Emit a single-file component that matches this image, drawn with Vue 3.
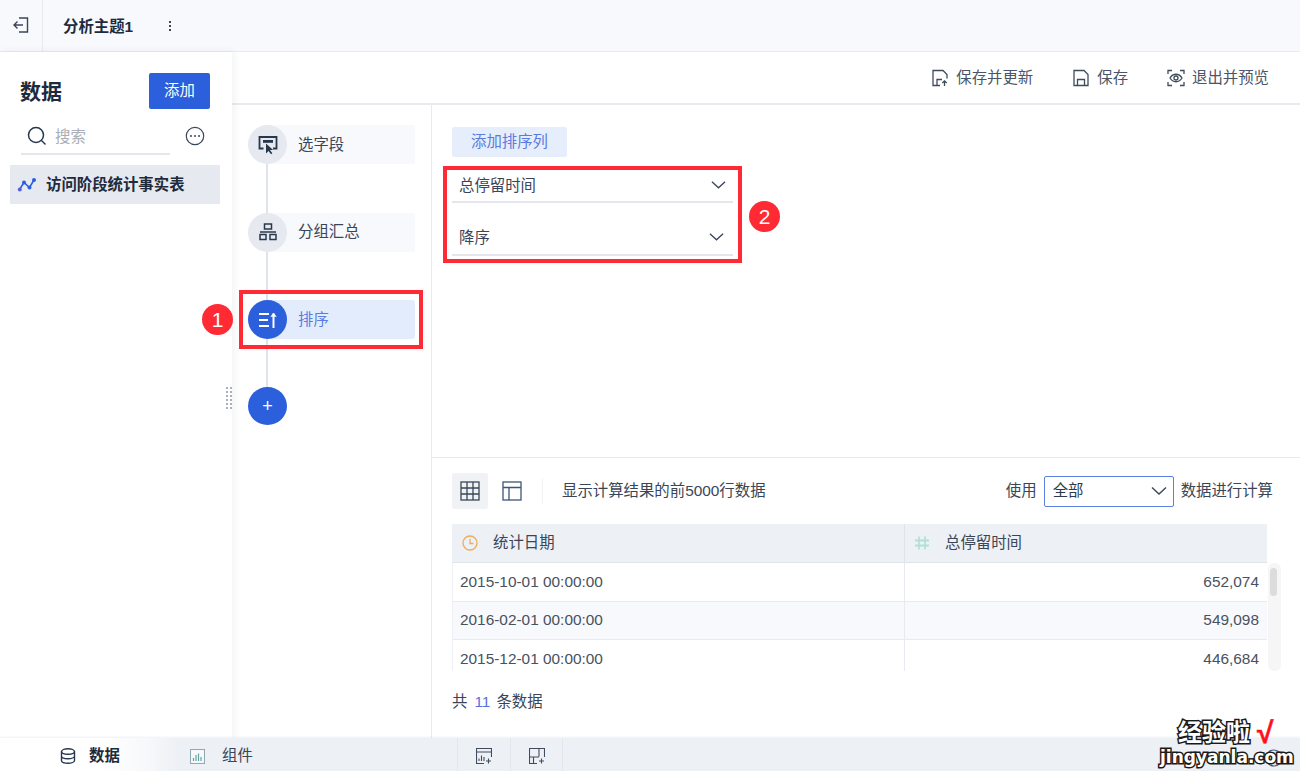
<template>
  <div class="page">
    <header class="topbar">
      <div class="exit-cell">
        <svg width="20" height="20" viewBox="0 0 20 20" fill="none" stroke="#3a4658" stroke-width="1.4">
          <path d="M8 3h8.5v14H8" />
          <path d="M12 10H3M6.5 6.5 3 10l3.5 3.5" />
        </svg>
      </div>
      <div class="topic">分析主题1</div>
      <div class="kebab"><i></i><i></i><i></i></div>
    </header>

    <div class="main">
      <aside class="data-panel">
        <div class="panel-head">
          <h2>数据</h2>
          <button class="add-btn">添加</button>
        </div>
        <div class="search-row">
          <div class="search-box">
            <svg width="20" height="20" viewBox="0 0 20 20" fill="none" stroke="#27384c" stroke-width="1.5">
              <circle cx="9" cy="9" r="7.5" />
              <path d="M14.5 14.5 18.5 18.5" />
            </svg>
            <span>搜索</span>
          </div>
          <svg class="more" width="20" height="20" viewBox="0 0 20 20" fill="none">
            <circle cx="10" cy="10" r="8.7" stroke="#3a4658" stroke-width="1.2" />
            <circle cx="6" cy="10" r="1" fill="#3a4658" />
            <circle cx="10" cy="10" r="1" fill="#3a4658" />
            <circle cx="14" cy="10" r="1" fill="#3a4658" />
          </svg>
        </div>
        <div class="table-item">
          <svg width="20" height="16" viewBox="0 0 20 16" fill="none">
            <path d="M2.5 12.5 7 5.5l5.5 5L17 3" stroke="#2b5fdc" stroke-width="1.5" />
            <circle cx="2.8" cy="12.5" r="2" fill="#5b5fd6" />
            <circle cx="7" cy="5.5" r="2" fill="#2b5fdc" />
            <circle cx="12.5" cy="10.5" r="2" fill="#2b5fdc" />
            <circle cx="17" cy="3" r="2" fill="#2b5fdc" />
          </svg>
          <span>访问阶段统计事实表</span>
        </div>
        <div class="drag-handle"><i v-for="n in 12" :key="n"></i></div>
      </aside>

      <section class="work">
        <div class="toolbar">
          <div class="tool">
            <svg width="18" height="18" viewBox="0 0 18 18" fill="none" stroke="#3e4c5e" stroke-width="1.3">
              <path d="M9 16.5H2V1.5h10l4 4v4" />
              <path d="M6 16.5v-6h5M13.5 17v-5M11.3 14l2.2-2.2 2.2 2.2" />
            </svg>
            <span>保存并更新</span>
          </div>
          <div class="tool">
            <svg width="18" height="18" viewBox="0 0 18 18" fill="none" stroke="#3e4c5e" stroke-width="1.3">
              <path d="M2 1.5h10l4 4v11H2z" />
              <path d="M5.5 16.5v-6h7v6" />
            </svg>
            <span>保存</span>
          </div>
          <div class="tool">
            <svg width="18" height="18" viewBox="0 0 18 18" fill="none" stroke="#3e4c5e" stroke-width="1.3">
              <path d="M1 5V1.500h4M13 1.500h4V5M17 13v3.500h-4M5 16.500H1V13" />
              <path d="M3 9c3-5 9-5 12 0-3 5-9 5-12 0z" />
              <circle cx="9" cy="9" r="2" />
            </svg>
            <span>退出并预览</span>
          </div>
        </div>

        <div class="work-body">
          <div class="steps">
            <div class="step-line"></div>
            <div class="step">
              <div class="step-circle">
                <svg width="20" height="20" viewBox="0 0 20 20" fill="none">
                  <path d="M5.500 13.500H1.500V2h17v11.500H15" stroke="#27384c" stroke-width="1.800" />
                  <rect x="5" y="5" width="10" height="2.800" fill="#27384c" />
                  <path d="M8 8.500v10l2.500-2.400 2.600 3.200 1.300-1.100-2.500-3.100h3.200z" fill="#27384c" />
                </svg>
              </div>
              <span class="step-label">选字段</span>
            </div>
            <div class="step">
              <div class="step-circle">
                <svg width="18" height="18" viewBox="0 0 18 18" fill="none" stroke="#27384c" stroke-width="1.5">
                  <rect x="5.500" y="1" width="7" height="5" />
                  <rect x="1" y="11.500" width="6" height="5" />
                  <rect x="11" y="11.500" width="6" height="5" />
                  <path d="M1 9h16" />
                </svg>
              </div>
              <span class="step-label">分组汇总</span>
            </div>
            <div class="step active">
              <div class="step-circle">
                <svg width="20" height="18" viewBox="0 0 20 18" fill="none" stroke="#fff" stroke-width="2">
                  <path d="M1 3h10M1 9h9M1 15h10" />
                  <path d="M15.500 17V2.500" />
                  <path d="M12.800 5.500 15.500 2l2.700 3.500z" fill="#fff" stroke-width="0.500" />
                </svg>
              </div>
              <span class="step-label">排序</span>
            </div>
            <div class="step-plus">+</div>
          </div>

          <div class="content">
            <div class="sort-config">
              <button class="add-sort">添加排序列</button>
              <div class="field first">
                <span>总停留时间</span>
                <svg class="chev" width="15" height="10" viewBox="0 0 16 10" fill="none" stroke="#3a4658" stroke-width="1.4"><path d="M1 1.500 8 8l7-6.500" /></svg>
              </div>
              <div class="field second">
                <span>降序</span>
                <svg class="chev" width="15" height="10" viewBox="0 0 16 10" fill="none" stroke="#3a4658" stroke-width="1.4"><path d="M1 1.500 8 8l7-6.500" /></svg>
              </div>
            </div>

            <div class="preview">
              <div class="preview-bar">
                <div class="view-btn on">
                  <svg width="20" height="20" viewBox="0 0 20 20" fill="none" stroke="#3a4658" stroke-width="1.300">
                    <rect x="1" y="1" width="18" height="18" />
                    <path d="M7 1v18M13 1v18M1 7h18M1 13h18" />
                  </svg>
                </div>
                <div class="view-btn">
                  <svg width="20" height="20" viewBox="0 0 20 20" fill="none" stroke="#3d5578" stroke-width="1.300">
                    <rect x="1" y="1" width="18" height="18" />
                    <path d="M1 6.500h18M7 6.500V19" />
                  </svg>
                </div>
                <div class="bar-sep"></div>
                <span class="bar-note">显示计算结果的前5000行数据</span>
                <div class="use">
                  <span>使用</span>
                  <div class="use-select">
                    <span>全部</span>
                    <svg width="16" height="10" viewBox="0 0 16 10" fill="none" stroke="#3a4658" stroke-width="1.400"><path d="M1 1.500 8 8l7-6.500" /></svg>
                  </div>
                  <span>数据进行计算</span>
                </div>
              </div>

              <div class="grid-wrap">
                <div class="grid-head">
                  <div class="hcell col-date">
                    <svg width="16" height="16" viewBox="0 0 16 16" fill="none" stroke="#f0ad5c" stroke-width="1.300">
                      <circle cx="8" cy="8" r="7" />
                      <path d="M8 4v4.500h3.500" />
                    </svg>
                    <span>统计日期</span>
                  </div>
                  <div class="hcell col-num">
                    <svg width="16" height="16" viewBox="0 0 16 16" fill="none" stroke="#b2e0d8" stroke-width="1.800">
                      <path d="M5 1.500v13M11 1.500v13M1 5.500h14M1 10.500h14" />
                    </svg>
                    <span>总停留时间</span>
                  </div>
                </div>
                <div class="grid-scroll">
                  <div class="grid-rows">
                    <div v-for="(row, i) in rows" :key="row.date" class="grow" :class="{ alt: i % 2 === 1 }">
                      <div class="dcell col-date">{{ row.date }}</div>
                      <div class="dcell col-num right">{{ row.value }}</div>
                    </div>
                  </div>
                  <div class="scrollbar"><div class="thumb"></div></div>
                </div>
              </div>

              <div class="total">共<em>11</em>条数据</div>
            </div>
          </div>
        </div>
      </section>
    </div>

    <footer class="bottombar">
      <div class="tab current">
        <svg width="16" height="16" viewBox="0 0 16 16" fill="none" stroke="#27384c" stroke-width="1.400">
          <ellipse cx="8" cy="3.500" rx="6.500" ry="2.700" />
          <path d="M1.500 3.500v9c0 1.500 3 2.700 6.500 2.700s6.500-1.200 6.500-2.700v-9M1.500 8c0 1.500 3 2.700 6.500 2.700s6.500-1.200 6.500-2.700" />
        </svg>
        <span>数据</span>
      </div>
      <div class="tab">
        <svg width="15" height="15" viewBox="0 0 15 15" fill="none">
          <rect x="0.500" y="0.500" width="14" height="14" fill="#f6f8fb" stroke="#8eaab0" />
          <path d="M3.500 12V9M6 12V6M8.500 12V4.500M11 12V8" stroke="#5fa8a8" stroke-width="1.200" />
        </svg>
        <span>组件</span>
      </div>
      <div class="add-sheets">
        <div class="sheet">
          <svg width="16" height="16" viewBox="0 0 16 16" fill="none" stroke="#3e4c5e" stroke-width="1.100">
            <path d="M8 15.500H.500V.500h15V9M.500 4h15" />
            <path d="M3 13v-2.500M5.500 13V7.500M8 13v-4M12.500 10.500v5M10 13h5" />
          </svg>
        </div>
        <div class="sheet">
          <svg width="16" height="16" viewBox="0 0 16 16" fill="none" stroke="#3e4c5e" stroke-width="1.100">
            <path d="M8 15.500H.500V.500h15V9M10 .500v8M.500 9h9.500M4.500 9v6.500M12.500 10.500v5M10 13h5" />
          </svg>
        </div>
      </div>
      <svg class="help" width="18" height="18" viewBox="0 0 18 18" fill="none" stroke="#3d5578" stroke-width="1.200"><circle cx="9" cy="9" r="8" /></svg>
    </footer>

    <div class="mark mark-one"></div>
    <div class="mark mark-two"></div>
    <div class="badge badge-one">1</div>
    <div class="badge badge-two">2</div>

    <div class="watermark">
      <div class="wm-top"><span>经验啦</span><b>√</b></div>
      <div class="wm-bottom">jingyanla.com</div>
    </div>
  </div>
</template>

<script setup>
const rows = [
  { date: '2015-10-01 00:00:00', value: '652,074' },
  { date: '2016-02-01 00:00:00', value: '549,098' },
  { date: '2015-12-01 00:00:00', value: '446,684' }
];
</script>

<style>
html,
body {
  margin: 0;
  overflow: hidden;
}
</style>

<style scoped>
.page {
  position: relative;
  display: flex;
  flex-direction: column;
  width: 1300px;
  height: 771px;
  overflow: hidden;
  background: #fff;
  color: #3a4658;
  font-family: "Liberation Sans", "Noto Sans CJK SC", sans-serif;
  font-size: 15.4px;
  line-height: 20px;
}

.topbar {
  display: flex;
  align-items: center;
  flex: none;
  height: 51px;
  background: #f8f9fd;
  border-bottom: 1px solid #e8eaf0;
}

.exit-cell {
  display: flex;
  align-items: center;
  justify-content: center;
  width: 42px;
  height: 100%;
  border-right: 1px solid #e8eaf0;
}

.exit-cell svg {
  margin-top: -2px;
}

.topic {
  margin: 3px 0 0 20px;
  color: #1d2b3c;
  font-weight: 700;
  font-size: 15.4px;
}

.kebab {
  display: flex;
  flex-direction: column;
  gap: 2px;
  margin-left: 36px;
}

.kebab i {
  width: 2px;
  height: 2px;
  background: #3a4658;
}

.main {
  display: flex;
  flex: 1;
  min-height: 0;
}

.data-panel {
  position: relative;
  z-index: 1;
  flex: none;
  width: 232px;
  background: #fff;
  box-shadow: 2px 0 8px rgba(40, 60, 90, 0.07);
}

.panel-head {
  display: flex;
  align-items: center;
  justify-content: space-between;
  padding: 21px 22px 0 20px;
}

.panel-head h2 {
  margin: 1px 0 0;
  color: #1d2b3c;
  font-size: 21px;
  font-weight: 700;
}

.add-btn {
  width: 61px;
  height: 36px;
  border: none;
  border-radius: 2px;
  background: #2b5fdc;
  color: #fff;
  font: inherit;
}

.search-row {
  display: flex;
  align-items: center;
  margin-top: 9px;
  padding-left: 21px;
}

.search-box {
  display: flex;
  align-items: center;
  gap: 8px;
  width: 143px;
  height: 35px;
  padding: 0 0 0 6px;
  border-bottom: 2px solid #e4e6ec;
  color: #a9aeb6;
}

.search-box span {
  margin-top: 2px;
}

.more {
  margin: -2px 0 0 15px;
}

.table-item {
  display: flex;
  align-items: center;
  gap: 9px;
  height: 39px;
  margin: 10px 12px 0 10px;
  padding-left: 7px;
  background: #e6e9f0;
  color: #1d2b3c;
  font-weight: 700;
}

.drag-handle {
  position: absolute;
  top: 335px;
  right: 0;
  display: grid;
  grid-template-columns: 2px 2px;
  gap: 2px;
  width: 6px;
}

.drag-handle i {
  height: 2px;
  background: #a9b0ba;
}

.work {
  display: flex;
  flex-direction: column;
  flex: 1;
  min-width: 0;
}

.toolbar {
  display: flex;
  align-items: center;
  justify-content: flex-end;
  flex: none;
  gap: 39px;
  height: 51px;
  padding-right: 31px;
  border-bottom: 2px solid #e8eaf0;
}

.tool {
  display: flex;
  align-items: center;
  gap: 7px;
  color: #4a5668;
}

.work-body {
  display: flex;
  flex: 1;
  min-height: 0;
}

.steps {
  position: relative;
  flex: none;
  width: 167px;
  padding: 20px 16px 0 16px;
  border-right: 1px solid #e8eaf0;
}

.step-line {
  position: absolute;
  top: 40px;
  bottom: 330px;
  left: 34px;
  width: 2px;
  background: #dfe3ea;
}

.step {
  position: relative;
  display: flex;
  align-items: center;
  height: 39px;
  margin-bottom: 48.500px;
  border-radius: 0 3px 3px 0;
  background: linear-gradient(90deg, transparent 19px, #f8f9fd 19px);
}

.step-circle {
  display: flex;
  align-items: center;
  justify-content: center;
  flex: none;
  width: 39px;
  height: 39px;
  border-radius: 50%;
  background: #e6e9f0;
}

.step-label {
  margin-left: 11px;
  color: #3a4658;
}

.step.active {
  background: linear-gradient(90deg, transparent 19px, #e3ecfd 19px);
}

.step.active .step-circle {
  background: #2b5fdc;
}

.step.active .step-label {
  color: #5b7be0;
}

.step-plus {
  position: relative;
  display: flex;
  align-items: center;
  justify-content: center;
  width: 39px;
  height: 38px;
  margin-top: -0.500px;
  border-radius: 50%;
  background: #2b5fdc;
  color: #fff;
  font-size: 18px;
}

.content {
  display: flex;
  flex-direction: column;
  flex: 1;
  min-width: 0;
}

.sort-config {
  flex: none;
  box-sizing: border-box;
  height: 353px;
  padding: 22px 0 0 20px;
  border-bottom: 1px solid #e8eaf0;
}

.add-sort {
  display: block;
  width: 115px;
  height: 30px;
  padding: 0;
  border: none;
  border-radius: 2px;
  background: #e6edfb;
  color: #5b7be0;
  font: inherit;
}

.field {
  display: flex;
  align-items: center;
  justify-content: space-between;
  box-sizing: border-box;
  width: 281px;
  padding: 0 7px;
  border-bottom: 2px solid #e4e6ec;
  color: #3a4658;
}

.field.first {
  height: 46px;
  padding-top: 13px;
}

.field.second {
  height: 53px;
  padding-top: 19px;
}

.field.second .chev {
  margin-right: 2px;
}

.chev {
  margin-top: -2px;
}

.preview {
  flex: 1;
  padding: 15px 0 0 20px;
}

.preview-bar {
  display: flex;
  align-items: center;
  height: 36px;
}

.view-btn {
  display: flex;
  align-items: center;
  justify-content: center;
  width: 36px;
  height: 36px;
  border-radius: 2px;
}

.view-btn + .view-btn {
  margin-left: 6px;
}

.bar-sep {
  width: 1px;
  height: 26px;
  margin: 0 19px 0 12px;
  background: #f0f2f6;
}

.view-btn.on {
  background: #f0f2f6;
}

.bar-note {
  color: #3a4658;
}

.use {
  display: flex;
  align-items: center;
  gap: 7px;
  margin-left: auto;
  margin-right: 27px;
}

.use-select {
  display: flex;
  align-items: center;
  justify-content: space-between;
  box-sizing: border-box;
  width: 130px;
  height: 31px;
  padding: 0 6px 0 8px;
  border: 1px solid #5b82e0;
  border-radius: 2px;
  color: #2e3b4c;
}

.grid-wrap {
  margin-top: 15px;
}

.grid-head {
  display: flex;
  width: 815px;
  height: 39px;
  background: #edf0f5;
  border-bottom: 1px solid #dfe3ea;
  box-sizing: border-box;
}

.hcell {
  display: flex;
  align-items: center;
  box-sizing: border-box;
  padding-left: 9px;
}

.hcell.col-date {
  padding-left: 10px;
}

.hcell span {
  margin-left: 15px;
}

.col-date {
  flex: none;
  width: 453px;
  border-right: 1px solid #dfe3ea;
}

.col-num {
  flex: 1;
}

.grid-scroll {
  display: flex;
  height: 108px;
  overflow: hidden;
}

.grid-rows {
  flex: none;
  width: 815px;
}

.grow {
  display: flex;
  box-sizing: border-box;
  height: 38.500px;
  border-bottom: 1px solid #e8eaf0;
  border-left: 1px solid #eef0f4;
}

.grow.alt {
  background: #f8f9fd;
}

.dcell {
  display: flex;
  align-items: center;
  padding: 0 8px 0 7px;
  color: #47525f;
}

.dcell.col-date {
  width: 452px;
  box-sizing: border-box;
  border-right: 1px solid #e8eaf0;
}

.dcell.right {
  justify-content: flex-end;
}

.scrollbar {
  width: 13px;
  margin-left: 1px;
  padding: 5px 2px 0;
  box-sizing: border-box;
  border-radius: 6px;
  background: #f6f6f6;
}

.thumb {
  width: 7px;
  height: 28px;
  border-radius: 4px;
  background: #dcdcdc;
}

.total {
  margin-top: 21px;
  color: #3a4658;
}

.total em {
  margin: 0 6px 0 7px;
  color: #5b6fe0;
  font-style: normal;
}

.bottombar {
  position: relative;
  z-index: 2;
  display: flex;
  align-items: center;
  flex: none;
  height: 33px;
  background: #edf0f5;
  box-shadow: 0 -1px 2px rgba(40, 60, 90, 0.08);
}

.tab {
  display: flex;
  align-items: center;
  box-sizing: border-box;
  height: 100%;
  gap: 17px;
  padding: 3px 0 0 12px;
}

.tab.current {
  justify-content: center;
  width: 178px;
  gap: 13px;
  padding: 3px 0 0 2px;
  background: linear-gradient(90deg, #fff 100px, #f6f8fa 150px, #edf0f5 178px);
  color: #1d2b3c;
  font-weight: 700;
}

.add-sheets {
  display: flex;
  position: absolute;
  left: 457px;
  height: 100%;
}

.sheet {
  display: flex;
  align-items: center;
  justify-content: center;
  box-sizing: border-box;
  width: 53px;
  height: 100%;
  padding-top: 3px;
  border-left: 1px solid #e4e7ed;
}

.sheet:last-child {
  border-right: 1px solid #e4e7ed;
}

.help {
  position: absolute;
  left: 1265px;
  top: 11px;
}

.mark {
  position: absolute;
  z-index: 3;
  box-sizing: border-box;
  border: 4px solid #ff2a33;
}

.mark-one {
  left: 239px;
  top: 290px;
  width: 184px;
  height: 59px;
}

.mark-two {
  left: 443px;
  top: 166px;
  width: 299px;
  height: 97px;
}

.badge {
  position: absolute;
  z-index: 3;
  display: flex;
  align-items: center;
  justify-content: center;
  width: 31px;
  height: 31px;
  border-radius: 50%;
  background: #ff2a33;
  color: #fff;
  font-size: 21px;
}

.badge-one {
  left: 202px;
  top: 304px;
}

.badge-two {
  left: 749px;
  top: 201px;
}

.watermark {
  position: absolute;
  z-index: 4;
  left: 1160px;
  top: 721px;
  color: #fff;
  font-weight: 700;
}

.wm-top {
  display: flex;
  align-items: center;
  height: 24px;
  margin-left: 18px;
  font-size: 24px;
  line-height: 24px;
  -webkit-text-stroke: 3px #1a1a1a;
  paint-order: stroke fill;
}

.wm-top b {
  margin-left: 7px;
  color: #ff0f1a;
  font-size: 30px;
  -webkit-text-stroke: 0.500px #ff0f1a;
}

.wm-bottom {
  font-family: "DejaVu Sans", sans-serif;
  font-size: 17px;
  line-height: 24px;
  -webkit-text-stroke: 3px #1a1a1a;
  paint-order: stroke fill;
}
</style>
